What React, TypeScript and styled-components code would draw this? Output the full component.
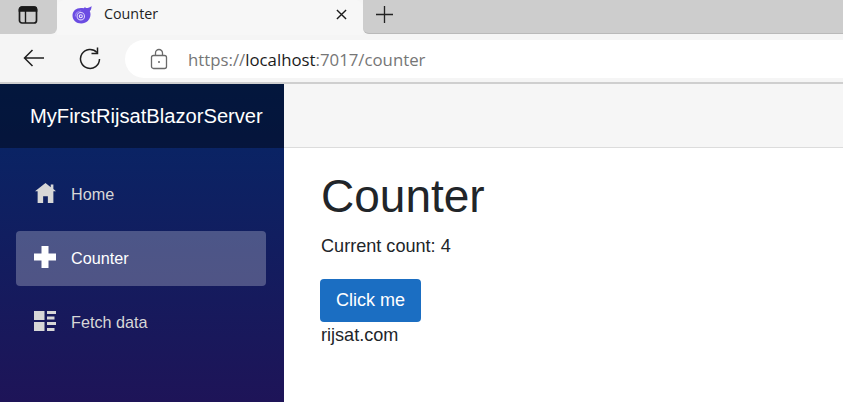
import styled, { createGlobalStyle } from 'styled-components';

const GlobalStyle = createGlobalStyle`
	html, body {
		margin: 0;
		padding: 0;
		height: 100%;
		overflow: hidden;
		background: #fff;
	}
	#root {
		height: 100%;
	}
`;

const TabIcon = () => (
	<svg width="20" height="18" viewBox="0 0 20 18">
		<path d="M19.500 0c.1 2.200-.5 4-1.700 5.300.5 1 .7 2.100.7 3.200 0 5-4.100 9-9.200 9S.500 14 .500 9.500 4 2 9 2c1 0 1.700.1 2.500.3.800-.4 1.200-.9 1.500-1.600.3.700.500 1.100.8 1.300C15.800 2.100 18 1.500 19.500 0z" fill="#6b4ce2" />
		<path d="M3.200 10.500a5.700 5.700 0 0 1 6-5.500" fill="none" stroke="#9a85ef" strokeWidth="1.100" />
		<circle cx="8.800" cy="10.200" r="3.700" fill="none" stroke="#d9d0fb" strokeWidth="1.100" />
		<circle cx="8.800" cy="10.200" r="1.500" fill="none" stroke="#eee9fe" strokeWidth="1.100" />
	</svg>
);

const PanelIcon = () => (
	<svg width="20" height="20" viewBox="0 0 20 20" fill="none" stroke="#1b1b1b" strokeWidth="1.700">
		<rect x="1.500" y="2" width="17" height="16" rx="2.500" />
		<path d="M1.500 4.500a2.500 2.500 0 0 1 2.500-2.500h12a2.500 2.500 0 0 1 2.500 2.500V6h-17z" fill="#1b1b1b" />
		<path d="M7.500 6v12" strokeWidth="1.400" />
	</svg>
);

const CloseIcon = () => (
	<svg width="11" height="11" viewBox="0 0 12 12" stroke="#1b1b1b" strokeWidth="1.500">
		<path d="M1 1l10 10M11 1L1 11" />
	</svg>
);

const PlusLineIcon = () => (
	<svg width="17" height="17" viewBox="0 0 18 18" stroke="#222" strokeWidth="1.400">
		<path d="M9 0v18M0 9h18" />
	</svg>
);

const BackIcon = () => (
	<svg width="22" height="18" viewBox="0 0 22 18" fill="none" stroke="#1f1f1f" strokeWidth="1.500">
		<path d="M21 9H1.500M9.500 1l-8 8 8 8" />
	</svg>
);

const ReloadIcon = () => (
	<svg width="24" height="24" viewBox="0 0 24 24" fill="none" stroke="#1f1f1f" strokeWidth="1.500">
		<path d="M19 6.500A9.500 9.500 0 1 0 21.500 13" />
		<path d="M19.500 1.500v6h-6" />
	</svg>
);

const LockIcon = () => (
	<svg width="18" height="22" viewBox="0 0 18 22" fill="none" stroke="#6a6a6a" strokeWidth="1.300">
		<rect x="1.500" y="7.500" width="15" height="13" rx="2" />
		<path d="M5.500 7.500V5a3.500 3.500 0 0 1 7 0v2.500" />
		<circle cx="9" cy="14" r="1" fill="#6a6a6a" stroke="none" />
	</svg>
);

const HomeIcon = () => (
	<svg width="21" height="20" viewBox="0 0 8 7.600" fill="#d7d7d7">
		<path d="M4 0L0 3.100h1V7.600h2.100V5h1.800v2.600H7V3.100h1L7 2.300V.6H6v1L4 0z" />
	</svg>
);

const PlusIcon = () => (
	<svg width="22" height="22" viewBox="0 0 22 22" fill="#fff">
		<path d="M7.500 0h7v7.500H22v7h-7.500V22h-7v-7.500H0v-7h7.500z" />
	</svg>
);

const ListIcon = () => (
	<svg width="22" height="20" viewBox="0 0 22 20" fill="#d7d7d7">
		<rect x="0" y="0" width="10.500" height="9" />
		<rect x="0" y="11" width="10.500" height="9" />
		<rect x="13" y="0" width="9" height="3" />
		<rect x="13" y="5.500" width="7.500" height="3" />
		<rect x="13" y="11" width="9" height="3" />
		<rect x="13" y="17" width="7.500" height="3" />
	</svg>
);

const App = () => {
	return (
		<>
			<GlobalStyle />
			<SWindow>
				<STabStrip>
					<SPanelButton>
						<PanelIcon />
					</SPanelButton>
					<STab>
						<TabIcon />
						<STabTitle>Counter</STabTitle>
						<CloseIcon />
					</STab>
					<SNewTab>
						<PlusLineIcon />
					</SNewTab>
				</STabStrip>
				<SToolbar>
					<SToolButton>
						<BackIcon />
					</SToolButton>
					<SToolButton>
						<ReloadIcon />
					</SToolButton>
					<SAddressBar>
						<LockIcon />
						<SUrl>
							https://<b>localhost</b>:7017/counter
						</SUrl>
					</SAddressBar>
				</SToolbar>
				<SPage>
					<SSidebar>
						<SBrand>MyFirstRijsatBlazorServer</SBrand>
						<SNav>
							<SNavItem>
								<SNavIcon>
									<HomeIcon />
								</SNavIcon>
								Home
							</SNavItem>
							<SNavItem $active>
								<SNavIcon>
									<PlusIcon />
								</SNavIcon>
								Counter
							</SNavItem>
							<SNavItem>
								<SNavIcon>
									<ListIcon />
								</SNavIcon>
								Fetch data
							</SNavItem>
						</SNav>
					</SSidebar>
					<SMain>
						<STopRow />
						<SContent>
							<STitle>Counter</STitle>
							<SCount>Current count: 4</SCount>
							<SButton>Click me</SButton>
							<SFootnote>rijsat.com</SFootnote>
						</SContent>
					</SMain>
				</SPage>
			</SWindow>
		</>
	);
};

export default App;

const SWindow = styled.div`
	display: flex;
	flex-direction: column;
	height: 402px;
	width: 843px;
	overflow: hidden;
	font-family: 'Liberation Sans', Arial, sans-serif;
`;

const STabStrip = styled.div`
	display: flex;
	height: 35px;
	background: #f5f5f5;
	flex-shrink: 0;
`;

const SPanelButton = styled.div`
	display: flex;
	align-items: center;
	justify-content: center;
	width: 57px;
	height: 34px;
	padding: 0 1px 4px 0;
	box-sizing: border-box;
	background: #cdcdcd;
	border-radius: 0 0 6px 0;
`;

const STab = styled.div`
	display: flex;
	align-items: center;
	width: 306px;
	height: 35px;
	box-sizing: border-box;
	padding: 0 16px 6px 15px;
	background: #f7f7f7;
	border-radius: 8px 8px 0 0;
	color: #1f1f1f;
`;

const STabTitle = styled.span`
	flex: 1;
	margin: 0 0 2px 12px;
	font-family: 'Open Sans', sans-serif;
	font-size: 14.300px;
`;

const SNewTab = styled.div`
	display: flex;
	align-items: center;
	flex: 1;
	height: 34px;
	padding: 0 0 5px 13px;
	box-sizing: border-box;
	background: #cdcdcd;
	border-bottom: 1px solid #b9b9b9;
	border-radius: 0 0 0 6px;
`;

const SToolbar = styled.div`
	display: flex;
	align-items: center;
	height: 49px;
	background: #f5f5f5;
	border-bottom: 2px solid #cfcfcf;
	box-sizing: border-box;
	padding: 3px 0 2px 0;
	flex-shrink: 0;
`;

const SToolButton = styled.div`
	display: flex;
	align-items: center;
	justify-content: center;
	width: 56px;
	height: 38px;
	margin: 0 0 2px 6px;

	& + & {
		margin: 0 7px 2px 0;
	}
`;

const SAddressBar = styled.div`
	display: flex;
	align-items: center;
	flex: 1;
	height: 38px;
	padding-left: 25px;
	background: #fff;
	border-radius: 19px 0 0 19px;
`;

const SUrl = styled.span`
	margin-left: 20px;
	font-family: 'Open Sans', sans-serif;
	font-size: 16.800px;
	color: #767676;

	b {
		font-weight: 400;
		color: #1b1b1b;
	}
`;

const SPage = styled.div`
	display: flex;
	flex: 1;
	min-height: 0;
`;

const SSidebar = styled.div`
	width: 284px;
	flex-shrink: 0;
	background: linear-gradient(180deg, #052767 0%, #1e1458 100%);
`;

const SBrand = styled.div`
	display: flex;
	align-items: center;
	height: 64px;
	padding-left: 30px;
	background: rgba(0, 0, 0, 0.4);
	color: #fff;
	font-size: 20.150px;
`;

const SNav = styled.div`
	display: flex;
	flex-direction: column;
	gap: 9px;
	padding: 19px 18px 0 16px;
`;

const SNavItem = styled.div<{ $active?: boolean }>`
	display: flex;
	align-items: center;
	height: 55px;
	border-radius: 4px;
	font-size: 16.200px;
	color: ${({ $active }) => ($active ? '#fff' : '#d7d7d7')};
	background: ${({ $active }) => ($active ? 'rgba(255, 255, 255, 0.25)' : 'transparent')};
`;

const SNavIcon = styled.span`
	display: flex;
	align-items: center;
	justify-content: center;
	width: 22px;
	margin: 0 15px 4px 18px;
`;

const SMain = styled.div`
	flex: 1;
	display: flex;
	flex-direction: column;
	background: #fff;
`;

const STopRow = styled.div`
	height: 64px;
	background: #f6f6f6;
	border-bottom: 1px solid #dcdcdc;
	box-sizing: border-box;
	flex-shrink: 0;
`;

const SContent = styled.div`
	display: flex;
	flex-direction: column;
	align-items: flex-start;
	padding: 21px 0 0 37px;
	color: #212529;
`;

const STitle = styled.h1`
	margin: 0;
	font-size: 46px;
	font-weight: 400;
	line-height: 55px;
`;

const SCount = styled.p`
	margin: 9px 0 0 0;
	font-size: 18.100px;
	line-height: 27px;
`;

const SButton = styled.button`
	margin: 19px 0 0 -1px;
	width: 101px;
	height: 43px;
	border: none;
	border-radius: 4px;
	background: #1b6ec2;
	color: #fff;
	font-family: inherit;
	font-size: 18px;
`;

const SFootnote = styled.div`
	font-size: 18.100px;
	line-height: 27px;
`;
